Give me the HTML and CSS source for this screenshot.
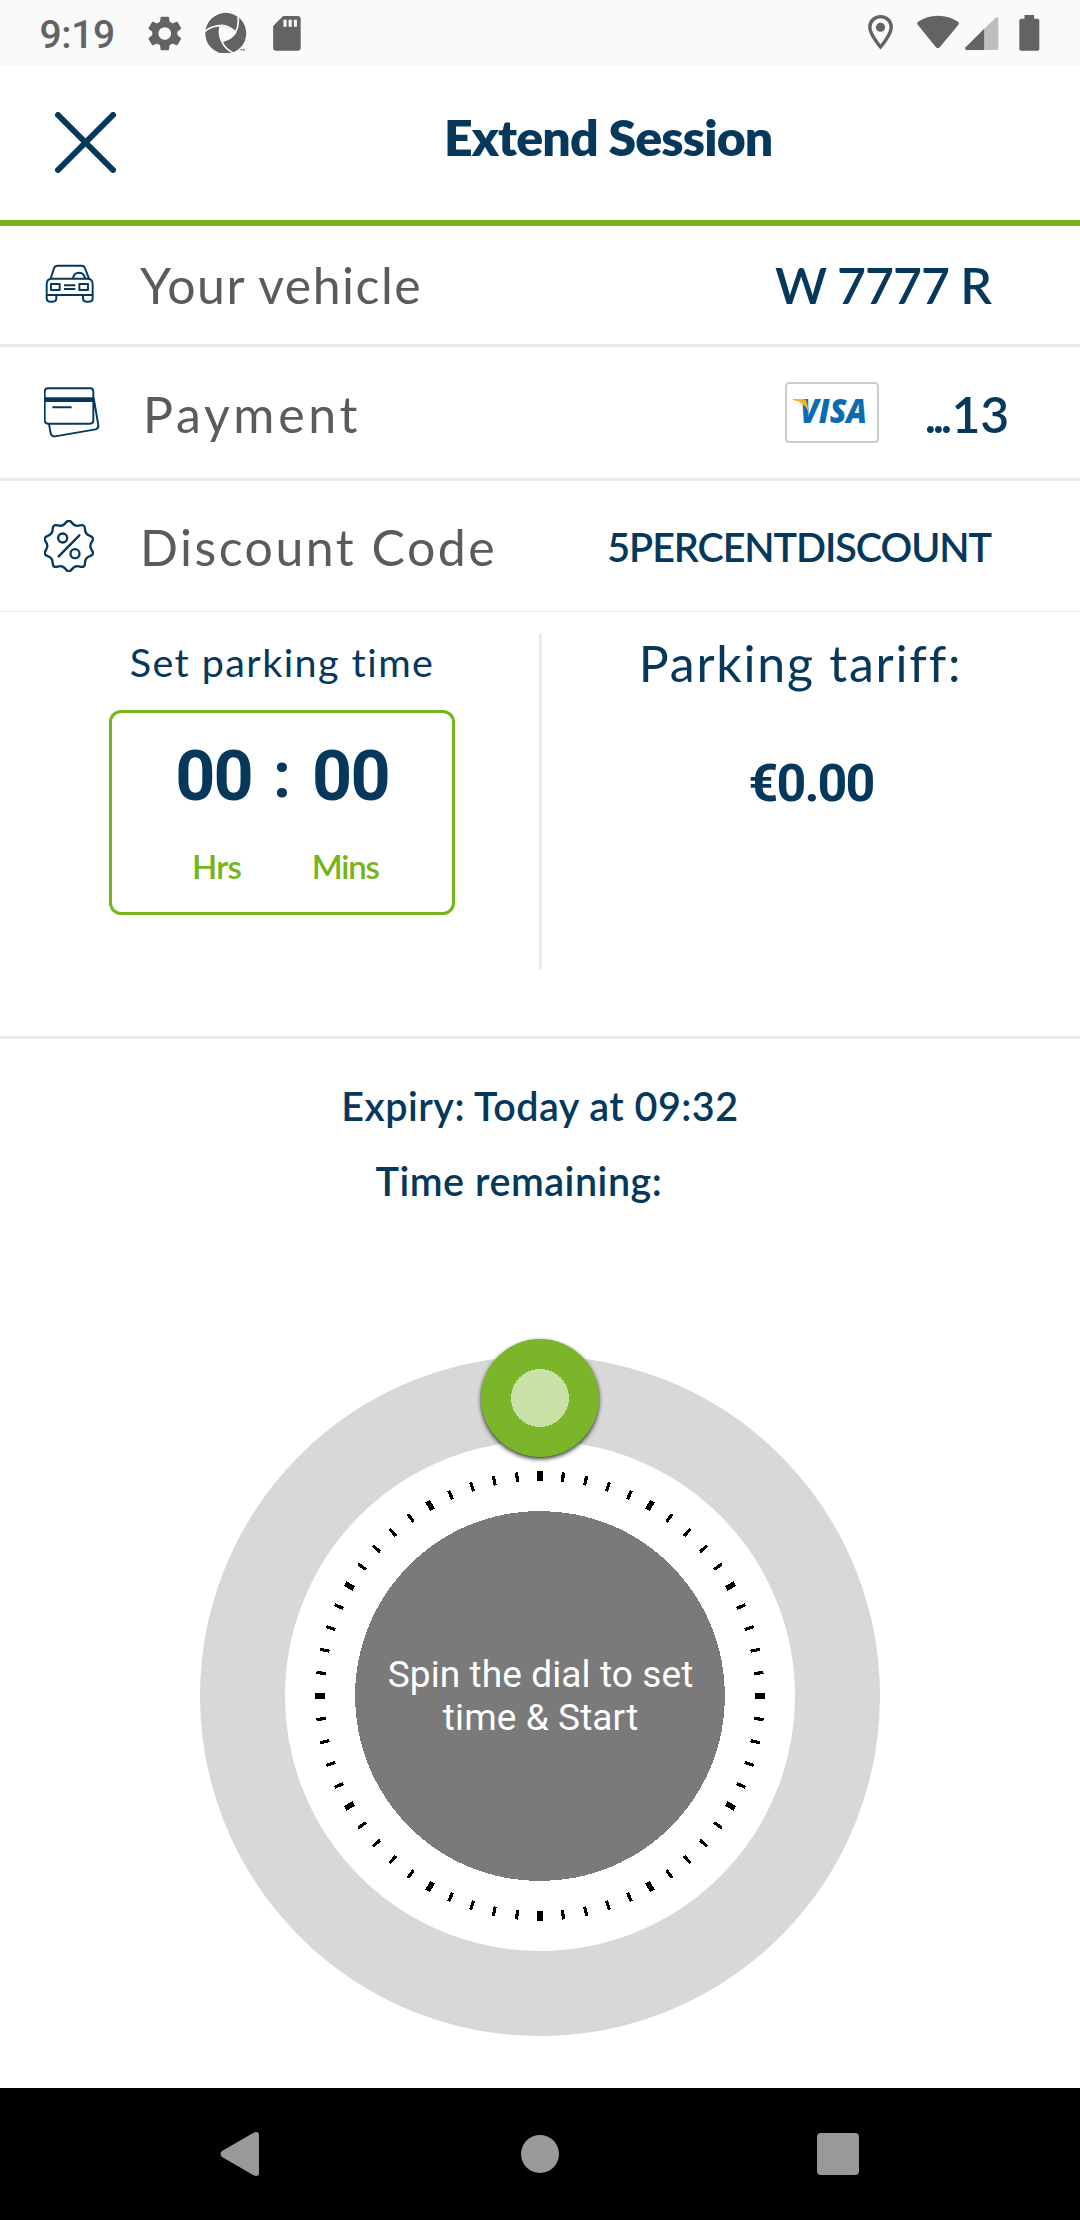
FILE: index.html
```html
<!DOCTYPE html>
<html lang="en">
<head>
<meta charset="utf-8">
<title>Extend Session</title>
<link rel="stylesheet" href="styles.css">
</head>
<body>
<div class="screen">
  <div class="status">
    <span class="clock">9:19</span>
    <svg class="status-left" viewBox="420 30 470 130" preserveAspectRatio="none">
      <g transform="translate(416.5 37.5) scale(5.08 5.25)">
        <path d="M19.14 12.94c.04-.3.06-.61.06-.94 0-.32-.02-.64-.07-.94l2.03-1.58c.18-.14.23-.41.12-.61l-1.92-3.32c-.12-.22-.37-.29-.59-.22l-2.39.96c-.5-.38-1.03-.7-1.62-.94l-.36-2.54c-.04-.24-.24-.41-.48-.41h-3.84c-.24 0-.43.17-.47.41l-.36 2.54c-.59.24-1.13.57-1.62.94l-2.39-.96c-.22-.08-.47 0-.59.22L2.74 8.87c-.12.21-.08.47.12.61l2.03 1.58c-.05.3-.09.63-.09.94s.02.64.07.94l-2.03 1.58c-.18.14-.23.41-.12.61l1.92 3.32c.12.22.37.29.59.22l2.39-.96c.5.38 1.03.7 1.62.94l.36 2.54c.05.24.24.41.48.41h3.84c.24 0 .44-.17.47-.41l.36-2.54c.59-.24 1.13-.56 1.62-.94l2.39.96c.22.08.47 0 .59-.22l1.92-3.32c.12-.22.07-.47-.12-.61l-2.01-1.58zM12 15.6c-1.98 0-3.6-1.62-3.6-3.6s1.62-3.6 3.6-3.6 3.6 1.62 3.6 3.6-1.62 3.6-3.6 3.6z"/>
      </g>
      <ellipse cx="654.500" cy="100" rx="59.500" ry="61.500"/>
      <path class="cut" d="M640 78Q664 80 682 98Q670 118 643 124Q633 100 640 78Z"/>
      <path class="slit" d="M592 96Q612 76 645 76Q670 80 684 99M690 50Q694 76 682 99Q668 120 642 124M680 161Q652 148 643 124Q631 100 640 77"/>
      <path class="cut" d="M678 165L692 150L716 140V165Z"/>
      <path d="M697 147h5v4h-5zM704 148h5v4h-5z"/>
      <path fill-rule="evenodd" d="M821 48H863Q872 48 872 57V143Q872 152 863 152H801Q792 152 792 143V78ZM822 59V80H831V59ZM837 59V80H846V59ZM852 59V80H861V59Z"/>
    </svg>
    <svg class="status-right" viewBox="940 30 520 140" preserveAspectRatio="none">
      <path class="pin" d="M988 50C970 50 957 64 957 82C957 104 988 141 988 141S1019 104 1019 82C1019 64 1006 50 988 50Z"/>
      <ellipse cx="988" cy="82" rx="13.500" ry="13.500"/>
      <path d="M1096 74Q1092 69 1097 65Q1122 47 1155 47T1213 65Q1218 69 1214 74L1160 142Q1155 147 1149 142Z"/>
      <path class="weak" d="M1289 87L1322 53Q1330 48 1330 56V145Q1330 150 1325 150H1289Z"/>
      <path d="M1289 86V150H1239Q1231 149 1235 142Z"/>
      <path d="M1406 45H1434V56H1444Q1449 56 1449 61V147Q1449 152 1444 152H1396Q1391 152 1391 147V61Q1391 56 1396 56H1406Z"/>
    </svg>
  </div>

  <header class="header">
    <svg class="close" viewBox="0 0 61 61"><path d="M3 3L58 58M58 3L3 58"/></svg>
    <h1 class="title">Extend Session</h1>
  </header>

  <div class="row row-vehicle">
    <div class="icon"><svg width="50" height="42" viewBox="42 38 150 126">
      <path d="M62 85L72 54Q75 46 83 46H155Q163 46 165 54L177 85M50 134V102Q50 85 65 85H173Q188 85 188 102V134ZM50 134V144Q50 154 60 154H68Q79 154 79 144V134M159 134V144Q159 154 169 154H178Q188 154 188 144V134M129 85Q131 67 147 67T165 85M63 101H89V119H63ZM148 101H174V119H148ZM102 105H136M102 116H136"/>
    </svg></div>
    <span class="label">Your vehicle</span>
    <span class="value">W 7777 R</span>
  </div>

  <div class="row row-payment">
    <div class="icon"><svg width="56" height="52" viewBox="42 410 168 156">
      <path d="M54 414H180Q190 414 190 424V510Q190 520 180 520H54Q44 520 44 510V424Q44 414 54 414ZM67 471H125M57 521L62 549Q65 560 75 558L197 537Q206 534 205 525L191 442"/>
      <path class="stripe" d="M44 441H190V455H44Z"/>
    </svg></div>
    <span class="label">Payment</span>
    <svg class="visa" viewBox="0 0 94 61">
      <rect x="1" y="1" width="92" height="59" rx="3"/>
      <text x="15" y="41" textLength="67" lengthAdjust="spacingAndGlyphs">VISA</text>
      <path d="M8 17H18Q21 17 22 21L24 31Q20 20 8 18Z"/>
    </svg>
    <span class="value"><span class="dots">...</span>13</span>
  </div>

  <div class="row row-discount">
    <div class="icon"><svg width="50" height="52" viewBox="42 810 150 156">
      <path class="badge" transform="translate(116.500 888)" d="M-9.300 -69.600Q0 -82 9.300 -69.600T33.400 -61.700T48.400 -50.800T63.300 -30.300T69 -12.700T69 12.700T63.300 30.300T48.400 50.800T33.400 61.700T9.300 69.600T-9.300 69.600T-33.400 61.700T-48.400 50.800T-63.300 30.300T-69 12.700T-69 -12.700T-63.300 -30.300T-48.400 -50.800T-33.400 -61.700T-9.300 -69.600Z"/>
      <path class="badge" d="M86 919L148 856"/>
      <circle class="badge" cx="98" cy="864" r="13.500"/><circle class="badge" cx="135" cy="911" r="13.500"/>
    </svg></div>
    <span class="label">Discount Code</span>
    <span class="value">5PERCENTDISCOUNT</span>
  </div>

  <section class="panel">
    <div class="time">
      <div class="time-title">Set parking time</div>
      <div class="timer">
        <div class="digits"><span>00</span><span class="colon">:</span><span>00</span></div>
        <div class="units"><span class="hrs">Hrs</span><span class="mins">Mins</span></div>
      </div>
    </div>
    <div class="divider"></div>
    <div class="tariff">
      <div class="tariff-title">Parking tariff:</div>
      <div class="price">€0.00</div>
    </div>
  </section>

  <section class="session">
    <div class="expiry">Expiry: Today at 09:32</div>
    <div class="remaining">Time remaining:</div>
    <svg class="dial" viewBox="190 1330 700 720">
      <circle class="track" cx="540" cy="1696" r="297.500"/>
      <circle class="ticks" cx="540" cy="1696" r="220" pathLength="360"/>
      <circle class="ticks-major" cx="540" cy="1696" r="220" pathLength="360"/>
      <circle class="hub" cx="540" cy="1696" r="185"/>
      <text class="hint" x="540.600" y="1687">Spin the dial to set</text>
      <text class="hint" x="540.600" y="1730">time &amp; Start</text>
      <circle class="knob" cx="540" cy="1398" r="59"/>
      <circle class="knob-dot" cx="540" cy="1398" r="29"/>
    </svg>
  </section>

  <nav class="nav">
    <svg width="40" height="46" viewBox="0 0 40 46"><path d="M2 20L34 1.500Q39 0 39 4V42Q39 46 34 44.500L2 26Q-1 23 2 20Z"/></svg>
    <svg width="40" height="40" viewBox="0 0 40 40"><circle cx="21" cy="20" r="19"/></svg>
    <svg width="42" height="42" viewBox="0 0 42 42"><rect width="42" height="42" rx="4"/></svg>
  </nav>
</div>
</body>
</html>
```
FILE: styles.css
```css
* { box-sizing: border-box; }
body { margin: 0; background: #fff; font-family: Lato, "Open Sans", sans-serif; color: #06385c; }
svg { display: block; flex: none; }
.screen { width: 1080px; height: 2220px; display: flex; flex-direction: column; overflow: hidden; white-space: nowrap; }

.status { height: 66px; background: #fafafa; display: flex; align-items: flex-start; padding: 10px 37px 0 39.6px; }
.status svg { fill: #636363; }
.clock { width: 105px; padding-top: 2px; font: 500 39px/46px Roboto, sans-serif; letter-spacing: -.4px; color: #636363; }
.status-left { width: 161.9px; height: 43.3px; }
.status-right { width: 179.1px; height: 46.7px; margin-left: auto; }
.status .cut { fill: #fafafa; }
.status .slit { fill: none; stroke: #fafafa; stroke-width: 5; }
.status .pin { fill: none; stroke: #636363; stroke-width: 10; }
.status .weak { fill: #bebebe; }

.header { height: 160px; border-bottom: 6px solid #78b41a; display: flex; align-items: center; padding-left: 55px; }
.close { width: 61px; height: 61px; margin-bottom: 2px; }
.close path { stroke: #06385c; stroke-width: 6; stroke-linecap: round; }
.title { margin: 0 0 0 328px; padding-bottom: 13px; font-size: 50px; line-height: 60px; font-weight: 800; letter-spacing: -.87px; }

.row { display: flex; align-items: center; padding-left: 44px; border-bottom: 3px solid #ebebeb; }
.row-vehicle { height: 121px; padding-bottom: 3px; padding-right: 89px; }
.row-payment { height: 134px; padding-right: 71px; }
.row-discount { height: 131px; padding-right: 89px; border-bottom-width: 1px; }
.icon { width: 96px; }
.icon path, .icon circle { fill: none; stroke: #06385c; stroke-width: 5.8; stroke-linejoin: round; }
.icon .stripe { fill: #06385c; stroke: none; }
.icon .badge { stroke-width: 7; stroke-linecap: round; }
.label { font-size: 50px; line-height: 60px; color: #5b5b5b; margin-right: auto; padding-top: 2px; }
.row-vehicle .label { letter-spacing: 1.5px; }
.row-payment .label { letter-spacing: 3.7px; padding: 3px 0 0 3px; }
.row-discount .label { letter-spacing: 2.49px; }
.value { font-size: 50px; line-height: 60px; font-weight: 600; letter-spacing: -1.05px; padding-top: 2px; }
.row-payment .value { padding-top: 3px; letter-spacing: -.3px; }
.dots { letter-spacing: -3.8px; margin-right: 3px; }
.row-discount .value { font-size: 39.5px; letter-spacing: -1.07px; }
.visa { width: 94px; height: 61px; margin-right: 46px; }
.visa rect { fill: #fff; stroke: #cdcdcd; stroke-width: 2; }
.visa text { font: italic 800 33.5px "Open Sans", sans-serif; fill: #0a6cb0; }
.visa path { fill: #f9b221; }

.panel { height: 427px; border-bottom: 3px solid #ebebeb; display: grid; grid-template-columns: 539px 3px 1fr; }
.time { padding: 26px 84px 0 109px; text-align: center; }
.time-title { font-size: 39.5px; line-height: 48px; letter-spacing: 1.44px; }
.timer { margin-top: 24px; height: 205px; border: 3px solid #78b41a; border-radius: 12px; padding-top: 23px; }
.digits { display: flex; justify-content: center; font: 700 70px/80px Roboto, sans-serif; letter-spacing: -1.76px; }
.colon { width: 60px; font-size: 64px; letter-spacing: 0; }
.units { display: flex; margin-top: 30px; padding-left: 80px; font-size: 33px; line-height: 40px; font-weight: 600; letter-spacing: -.8px; text-align: left; color: #78b41a; }
.hrs { width: 119.7px; }
.mins { letter-spacing: -1.18px; }
.divider { background: #ebebeb; margin: 22px 0 66px; }
.tariff { padding-top: 21px; text-align: center; }
.tariff-title { font-size: 50px; line-height: 60px; letter-spacing: 1.77px; padding-right: 21px; }
.price { margin-top: 61px; font: 700 52px/60px Roboto, sans-serif; letter-spacing: -1.9px; }

.session { flex: 1; padding-top: 43px; display: flex; flex-direction: column; align-items: center; font-size: 39.5px; line-height: 48px; font-weight: 600; }
.expiry { letter-spacing: .48px; }
.remaining { margin-top: 27px; padding-right: 42px; letter-spacing: .53px; }
.dial { width: 700px; height: 720px; margin-top: 125px; }
.track { fill: none; stroke: #d8d8d8; stroke-width: 85; }
.ticks, .ticks-major { fill: none; stroke: #000; shape-rendering: crispEdges; }
.ticks { stroke-width: 9.5; stroke-dasharray: .84 5.16; stroke-dashoffset: .42; }
.ticks-major { stroke-width: 10; stroke-dasharray: 1.4 28.6; stroke-dashoffset: .7; }
.hub { fill: #7a7a7a; shape-rendering: crispEdges; }
.hint { font: 400 37px Roboto, sans-serif; letter-spacing: .1px; fill: #fff; text-anchor: middle; }
.knob { fill: #7ab52a; filter: drop-shadow(0 2px 2px rgba(0, 0, 0, .8)); }
.knob-dot { fill: #c8e1a7; shape-rendering: crispEdges; }

.nav { height: 132px; background: #000; display: flex; align-items: center; justify-content: space-between; padding: 0 221px 0 220px; }
.nav svg { fill: #999; }
```
